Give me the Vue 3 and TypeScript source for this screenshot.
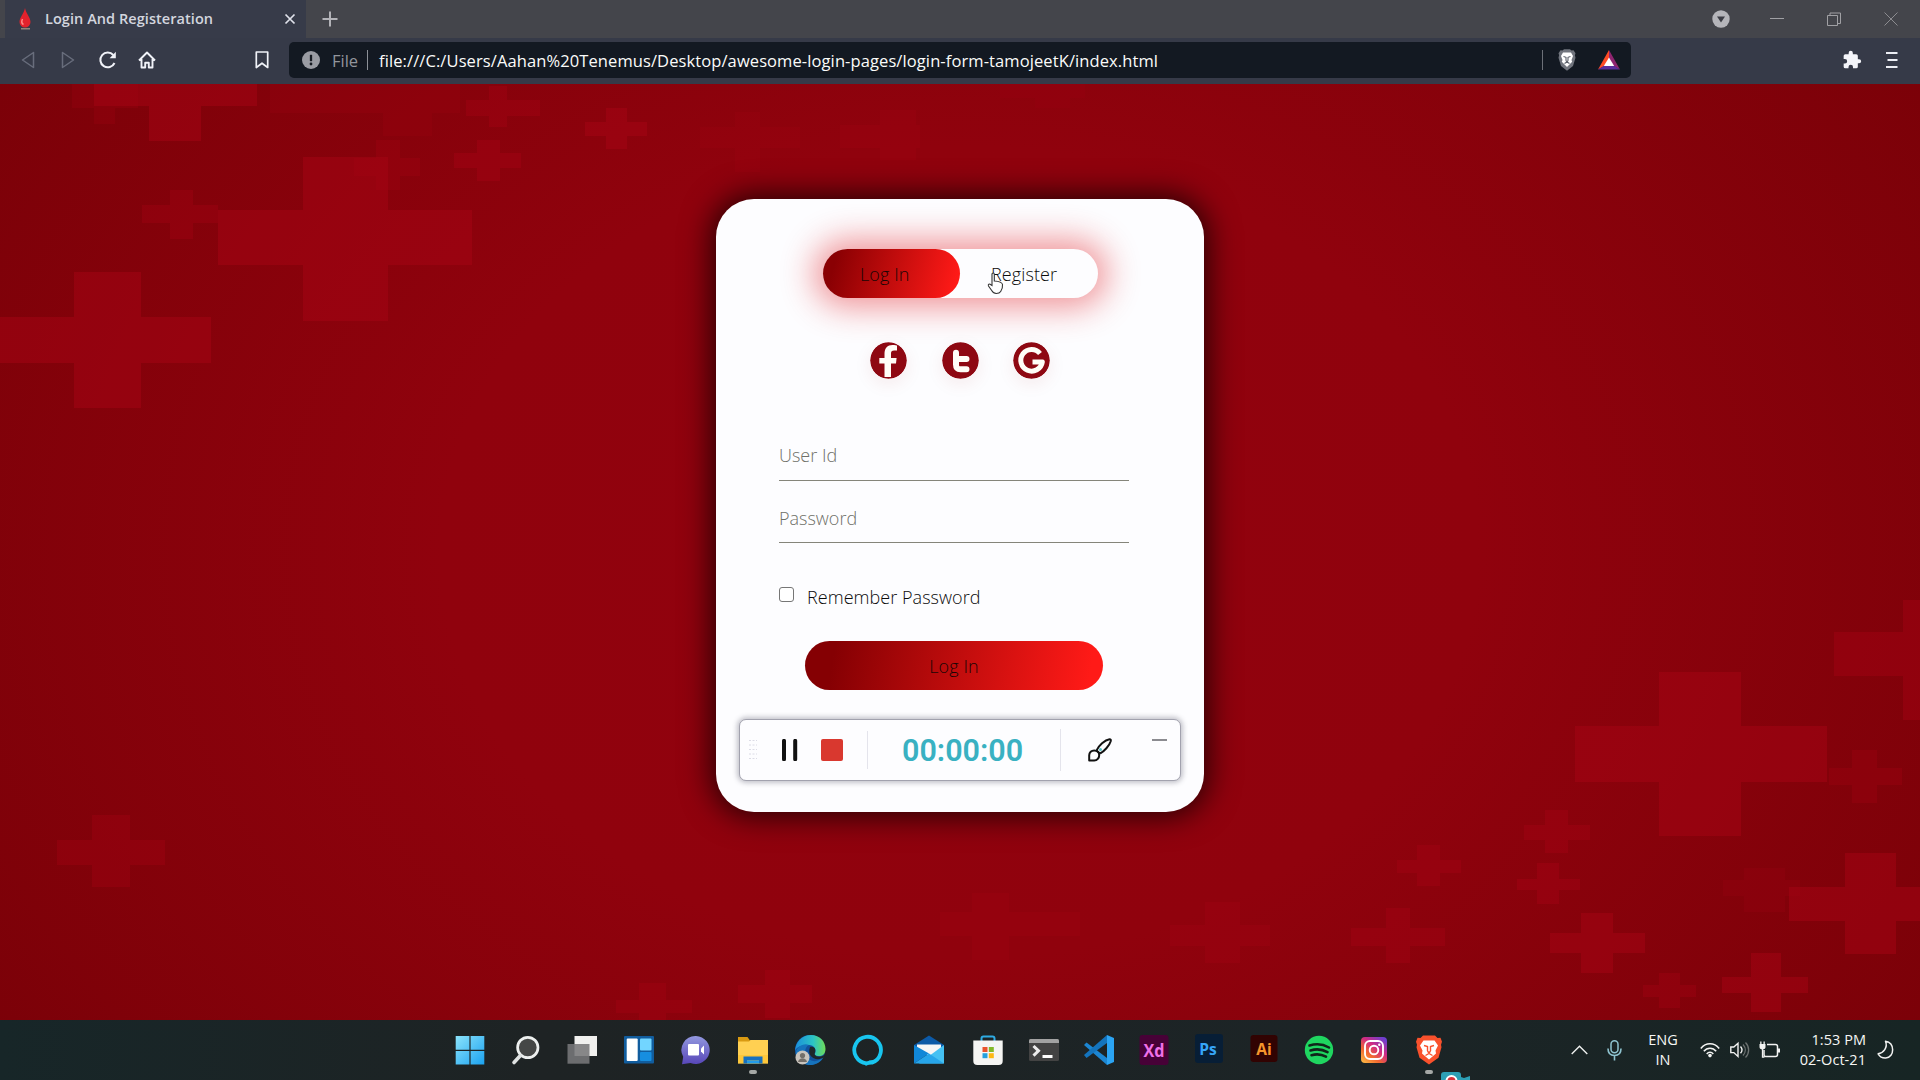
<script setup lang="ts">
import { ref } from 'vue'

interface Cross {
  v: [number, number, number, number]
  h: [number, number, number, number]
  o: number
}

// Each cross is an upright bar and a level bar, given as x1, y1, x2, y2.
const crosses: Cross[] = [
  { v: [303, 157, 388, 321], h: [218, 210, 472, 265], o: 0.5 },
  { v: [74, 272, 141, 408], h: [0, 317, 211, 363], o: 0.5 },
  { v: [170, 190, 193, 239], h: [142, 205, 218, 223], o: 0.35 },
  { v: [149, 84, 201, 141], h: [94, 84, 257, 106], o: 0.5 },
  { v: [94, 84, 115, 124], h: [72, 84, 138, 108], o: 0.25 },
  { v: [489, 86, 507, 127], h: [466, 100, 540, 116], o: 0.4 },
  { v: [606, 108, 627, 149], h: [585, 122, 647, 136], o: 0.5 },
  { v: [477, 140, 500, 181], h: [454, 153, 521, 168], o: 0.45 },
  { v: [376, 140, 400, 190], h: [354, 158, 420, 176], o: 0.3 },
  { v: [383, 84, 432, 136], h: [270, 84, 460, 113], o: 0.2 },
  { v: [735, 112, 760, 172], h: [700, 127, 800, 148], o: 0.2 },
  { v: [880, 110, 916, 160], h: [840, 125, 920, 148], o: 0.25 },
  { v: [1035, 84, 1070, 108], h: [1000, 84, 1085, 98], o: 0.15 },
  { v: [1659, 672, 1741, 836], h: [1575, 726, 1827, 782], o: 0.5 },
  { v: [1903, 600, 1920, 720], h: [1834, 632, 1920, 676], o: 0.45 },
  { v: [1845, 853, 1896, 954], h: [1789, 887, 1920, 921], o: 0.5 },
  { v: [1852, 750, 1877, 803], h: [1829, 768, 1902, 785], o: 0.3 },
  { v: [1581, 913, 1613, 973], h: [1550, 933, 1645, 953], o: 0.5 },
  { v: [1751, 953, 1781, 1012], h: [1722, 977, 1808, 993], o: 0.5 },
  { v: [1545, 810, 1568, 853], h: [1524, 825, 1590, 840], o: 0.4 },
  { v: [1537, 863, 1559, 904], h: [1517, 879, 1580, 890], o: 0.45 },
  { v: [1417, 845, 1440, 886], h: [1397, 860, 1461, 873], o: 0.4 },
  { v: [1386, 908, 1410, 963], h: [1351, 928, 1445, 946], o: 0.4 },
  { v: [1659, 973, 1680, 1008], h: [1643, 985, 1696, 997], o: 0.35 },
  { v: [1744, 868, 1785, 912], h: [1723, 880, 1800, 896], o: 0.2 },
  { v: [1205, 902, 1240, 963], h: [1170, 925, 1270, 946], o: 0.3 },
  { v: [92, 815, 130, 887], h: [57, 840, 165, 865], o: 0.35 },
  { v: [639, 983, 666, 1020], h: [616, 1000, 692, 1013], o: 0.35 },
  { v: [765, 970, 790, 1018], h: [738, 985, 812, 1003], o: 0.4 },
  { v: [972, 893, 1009, 960], h: [940, 912, 1080, 936], o: 0.25 },
]

const bar = (b: [number, number, number, number]) => `M${b[0]} ${b[1]}H${b[2]}V${b[3]}H${b[0]}Z`

const userId = ref('')
const password = ref('')
const remember = ref(false)
</script>

<template>
  <div class="screen">
    <header class="tabstrip">
      <div class="tab">
        <svg class="drop" width="12" height="22" viewBox="0 0 12 22">
          <path d="M6 0C6.800 5 11.500 9.500 11.500 14a5.500 5.500 0 0 1-11 0C.5 9.500 5.200 5 6 0Z" fill="#e3222c" />
          <path d="M3.500 11c-1.600 3.500 0 5 1 5.500" stroke="#ff8a86" stroke-width="1.500" fill="none" />
          <path d="M2 20.800h9" stroke="#a98" stroke-width="1.200" />
        </svg>
        <span class="tab-title">Login And Registeration</span>
        <svg class="tab-close" width="12" height="12" viewBox="0 0 12 12"><path d="M1.500 1.500l9 9M10.500 1.500l-9 9" stroke="#dfe1ea" stroke-width="1.700" /></svg>
      </div>
      <svg class="new-tab" width="16" height="16" viewBox="0 0 16 16"><path d="M8 .5v15M.5 8h15" stroke="#b3b3b8" stroke-width="2" /></svg>
      <div class="window-buttons">
        <svg width="18" height="18" viewBox="0 0 18 18"><circle cx="9" cy="9" r="8.700" fill="#b5b5ba" /><path d="M5 6.500h8L9 12.500Z" fill="#3c3d45" /></svg>
        <svg width="14" height="14" viewBox="0 0 14 14"><path d="M0 6.500h14" stroke="#a0a0a4" /></svg>
        <svg width="14" height="14" viewBox="0 0 14 14"><path d="M.5 3.500h10v10H.5ZM3 3.500V1h10.500v10.500h-3" stroke="#a0a0a4" fill="none" /></svg>
        <svg width="14" height="14" viewBox="0 0 14 14"><path d="M.5.5l13 13M13.500.5l-13 13" stroke="#8c8c90" /></svg>
      </div>
    </header>

    <nav class="toolbar">
      <svg class="back" width="14" height="18" viewBox="0 0 14 18"><path d="M12.500 1.500v15L1.500 9Z" stroke="#686d7c" stroke-width="1.500" fill="none" stroke-linejoin="round" /></svg>
      <svg class="forward" width="14" height="18" viewBox="0 0 14 18"><path d="M1.500 1.500v15L12.500 9Z" stroke="#686d7c" stroke-width="1.500" fill="none" stroke-linejoin="round" /></svg>
      <svg class="reload" width="20" height="20" viewBox="0 0 20 20"><path d="M16.500 13a7.400 7.400 0 1 1-1.200-8" stroke="#f0f2f8" stroke-width="2" fill="none" /><path d="M17.800 1.800v6.400h-6.200Z" fill="#f0f2f8" /></svg>
      <svg class="home" width="18" height="18" viewBox="0 0 18 18"><path d="M1 9.500L9 1.500l8 8M3.500 8v8.500h3.700v-4.800h3.600v4.800h3.700V8" stroke="#f0f2f8" stroke-width="1.900" fill="none" stroke-linejoin="round" /></svg>
      <svg class="mark" width="14" height="18" viewBox="0 0 14 18"><path d="M1.300 1h11.400v15.500L7 12.200 1.300 16.500Z" stroke="#f0f2f8" stroke-width="1.700" fill="none" stroke-linejoin="round" /></svg>
      <div class="address">
        <svg width="18" height="18" viewBox="0 0 18 18"><circle cx="9" cy="9" r="9" fill="#9a9ca3" /><path d="M9 3.800v6.400" stroke="#171b22" stroke-width="2.300" /><circle cx="9" cy="13" r="1.400" fill="#171b22" /></svg>
        <span class="scheme">File</span>
        <i class="bar-line"></i>
        <span class="url">file:///C:/Users/Aahan%20Tenemus/Desktop/awesome-login-pages/login-form-tamojeetK/index.html</span>
        <i class="end-line"></i>
        <svg class="shield" width="18" height="22" viewBox="0 0 18 22"><path d="M4.500 1.500 6 .3h6l1.500 1.200 2-.3 2 3-.6 2 .6 2.500L15 17l-6 4.700L3 17 .5 8.700l.6-2.500-.6-2 2-3Z" fill="#70747d" /><path d="M5 3.500h8l2 3.500-1.500 4 .7 1.800L9 18l-5.200-5.200.7-1.800L3 7Z" fill="#fff" /><path d="M5.500 7.500l2.500.8v3.500M12.500 7.500l-2.500.8v3.500M6.500 14.500 9 13l2.500 1.500M8 11.700l1 1.300 1-1.300" stroke="#5a5f69" stroke-width="1.100" fill="none" /></svg>
        <svg class="bat" width="22" height="20" viewBox="0 0 22 20"><path d="M11 0 0 19.500l11-6Z" fill="#ff4b24" /><path d="M11 0l11 19.500-11-6Z" fill="#8f2470" /><path d="M0 19.500h22l-11-7Z" fill="#5b2e9c" /><path d="M11 7.500 5.800 16h10.400Z" fill="#fff" /></svg>
      </div>
      <svg class="puzzle" width="20" height="20" viewBox="0 0 24 24"><path d="M20.500 11H19V7a2 2 0 0 0-2-2h-4V3.500a2.500 2.500 0 0 0-5 0V5H4a2 2 0 0 0-2 2v3.800h1.500a2.700 2.700 0 0 1 0 5.400H2V20a2 2 0 0 0 2 2h3.800v-1.500a2.700 2.700 0 0 1 5.400 0V22H17a2 2 0 0 0 2-2v-4h1.500a2.500 2.500 0 0 0 0-5Z" fill="#f4f5fa" /></svg>
      <svg class="menu" width="12" height="16" viewBox="0 0 12 16"><path d="M0 1h11.500M1.500 8h10M0 15h11.500" stroke="#eceef4" stroke-width="1.900" /></svg>
    </nav>

    <main class="page">
      <svg class="pattern" width="1920" height="936" viewBox="0 84 1920 936">
        <path v-for="(c, i) in crosses" :key="i" :d="bar(c.v) + bar(c.h)" fill="#a50313" :opacity="c.o" />
      </svg>

      <section class="card">
        <div class="toggle">
          <button class="choice active">Log In</button>
          <button class="choice register">Register</button>
        </div>

        <div class="socials">
          <svg viewBox="0 0 37 37" width="37" height="37"><circle cx="18.500" cy="18.500" r="18.300" fill="#8e0812" /><path d="M14.500 35V21.500H9.300v-5.500h5.200v-4c0-6 3-9 8-9 2.500 0 4 .3 4.500.6v4.800h-2.800c-2.500 0-3.200 1.100-3.200 3V16h5.600l-.6 5.500H21V35Z" fill="#fffdf7" /></svg>
          <svg viewBox="0 0 37 37" width="37" height="37"><circle cx="18.500" cy="18.500" r="18.300" fill="#8e0812" /><path d="M14 10.800v11.700c0 3.200 1.300 4.700 4.500 4.700h6M14 17h10.500" stroke="#fffdf7" stroke-width="6" stroke-linecap="round" stroke-linejoin="round" fill="none" /></svg>
          <svg viewBox="0 0 37 37" width="37" height="37"><circle cx="18.500" cy="18.500" r="18.300" fill="#8e0812" /><path d="M27 11.500a10.800 10.800 0 1 0 2.300 8.500H19.500" stroke="#fffdf7" stroke-width="5" fill="none" stroke-linejoin="round" /></svg>
        </div>

        <form class="form" @submit.prevent>
          <input v-model="userId" class="field" type="text" placeholder="User Id" />
          <input v-model="password" class="field second" type="password" placeholder="Password" />
          <label class="remember"><input v-model="remember" type="checkbox" /><span>Remember Password</span></label>
          <button class="submit" type="submit">Log In</button>
        </form>
      </section>

      <div class="recorder">
        <svg class="grip" width="8" height="22" viewBox="0 0 8 22"><path d="M0 1.500h8M0 6h8M0 10.500h8M0 15h8M0 19.500h8" stroke="#dcdce6" stroke-dasharray="2 1.500" /></svg>
        <svg class="pause" width="16" height="22" viewBox="0 0 16 22"><path d="M2 1.800v18.400M13.200 1.800v18.400" stroke="#111" stroke-width="4" stroke-linecap="round" /></svg>
        <i class="stop"></i>
        <i class="rule"></i>
        <span class="timer">00:00:00</span>
        <i class="rule tall"></i>
        <svg class="brush" width="24" height="24" viewBox="0 0 24 24"><g stroke="#111" stroke-width="2" fill="none" stroke-linejoin="round"><path d="M8.500 12.500C10.500 7.500 17 1.800 21.500 1.200c1.300 0 1.500.8 1.200 2C21.500 7.500 16 13.500 12 15.500" /><path d="M1.200 22.500v-5.200c0-3 2.200-4.800 5-4.800s5 2 5 4.700-2 5.300-5 5.300Z" /><path d="M8.500 12.500 12 15.500" /></g><circle cx="12.500" cy="11.500" r="1.500" fill="#54bfc4" /></svg>
        <i class="minimise"></i>
      </div>

      <svg class="pointer" width="17" height="23" viewBox="0 0 17 23"><path d="M5 13.500V2.300c0-1.700 2.300-1.700 2.300 0V9c3.500.2 7.700 1 8.200 3.500.3 2.500-.5 5-1.800 7-1 1.700-2.300 2-4.500 2-2.500 0-3.500-1.300-4.500-3L1.500 14c-.8-1.700 1-2.500 2-1.500Z" fill="#fff" stroke="#333" stroke-width="1.100" /></svg>
    </main>

    <footer class="taskbar">
      <div class="apps">
        <svg viewBox="-16 -16 32 32"><defs><linearGradient id="win" x1="0" y1="0" x2="1" y2="1"><stop offset="0" stop-color="#8be3fb" /><stop offset="1" stop-color="#1ba2f0" /></linearGradient></defs><path d="M-14.300-14H-.6V-.3H-14.300ZM.6-14H14.300V-.3H.6ZM-14.300.9H-.6V14.600H-14.300ZM.6.9H14.300V14.600H.6Z" fill="url(#win)" /></svg>
        <svg viewBox="-16 -16 32 32"><circle cx="1.800" cy="-2.500" r="10.200" fill="#454746" stroke="#edf0ef" stroke-width="2.700" /><path d="M-5.800 5.700-12 12.500" stroke="#dfe2e2" stroke-width="3.600" stroke-linecap="round" /></svg>
        <svg viewBox="-16 -16 32 32"><path d="M-7.500-14H15V6H-7.500Z" fill="#f1f1ef" /><path d="M-14.500-6H7.500V13.700H-14.500Z" fill="#77787a" opacity=".88" /></svg>
        <svg viewBox="-16 -16 32 32"><rect x="-15" y="-14" width="30" height="27.500" rx="1" fill="#115d9e" /><rect x="-12.300" y="-11.500" width="11" height="22.500" rx="1" fill="#fff" /><rect x="1" y="-11.500" width="11.500" height="12" rx="1" fill="#72d5ff" /><rect x="1" y="2" width="11.500" height="9" rx="1" fill="#168ee0" /></svg>
        <svg viewBox="-16 -16 32 32"><defs><linearGradient id="chat" x2="0" y2="1"><stop stop-color="#9298df" /><stop offset="1" stop-color="#5746b8" /></linearGradient></defs><path d="M0-14a14 14 0 1 1-5.500 27l-8.500 1.200 1.200-7.400A14 14 0 0 1 0-14Z" fill="url(#chat)" /><rect x="-8" y="-6" width="11" height="11.500" rx="1" fill="#fff" /><path d="M5-1.500 8-4.500V4.500L5 1.500Z" fill="#fff" /></svg>
        <svg viewBox="-16 -16 32 32"><path d="M-15-13h9.500l2.500 3.500H15V0H-15Z" fill="#d99a12" /><path d="M-15-8.500h11L-2.500-10H15V13.500H-15Z" fill="#ffd052" /><path d="M-15 5H15V13.500H-15Z" fill="#fbc12d" opacity=".6" /><path d="M-9.500 13.500V6.500h19v7H6v-3H-6v3Z" fill="#1670bf" /><path d="M-6 10.500H6v3H-6Z" fill="#239be9" /></svg>
        <svg viewBox="-16 -16 32 32"><defs><linearGradient id="edge"><stop stop-color="#1b8edc" /><stop offset=".6" stop-color="#2cc4c4" /><stop offset="1" stop-color="#6fdc58" /></linearGradient></defs><circle r="15" fill="#12529e" /><path d="M-15 2C-15-8-8-15 1-15S15.500-8.500 15.500-1 8 7.500 4.500 4.500C7.500 0 4-5-1-5S-15-4-15 2Z" fill="url(#edge)" /><path d="M-1-5C-6-3-6 5-1 9S9 11 13.500 7C9 17-7 18-13 8-18-1-7-8-1-5Z" fill="#1673bd" /><path d="M0-3c6-1 6 4 4.500 7C6 8 12 7 14 5v2C8 12-4 8 0-3Z" fill="#1e272a" /><circle cx="-7.500" cy="7.500" r="7" fill="#c9c4bd" /><circle cx="-7.500" cy="5.500" r="2.600" fill="#746f69" /><path d="M-12 12c1-5 8-5 9 0Z" fill="#746f69" /></svg>
        <svg viewBox="-16 -16 32 32"><path d="M-1.500 13.300A13.300 13.300 0 1 1 4 12.600Q1 12.500-1.500 13.300Z" fill="none" stroke="#18c5ef" stroke-width="3.800" stroke-linejoin="round" /><path d="M-3 15.500 1 10.500 6 10-1 15.500Z" fill="#18c5ef" /></svg>
        <svg viewBox="-16 -16 32 32"><path d="M-15-5 0-14.500 15-5V5H-15Z" fill="#0c5aa7" /><path d="M-12-5.500H12V5H-12Z" fill="#f6f6f6" /><path d="M-15-5 0 3.500-15 13.500Z" fill="#1187d8" /><path d="M15-5-10 13.500H15Z" fill="#45c1f3" /><path d="M-15 13.500 0 3.500 15 13.500Z" fill="#27a5ea" /></svg>
        <svg viewBox="-16 -16 32 32"><path d="M-6.500-8V-11.500q0-2 2-2h9q2 0 2 2V-8" fill="none" stroke="#2eabe3" stroke-width="2" /><path d="M-14.700-9.500H14.700V11q0 4-4 4H-10.700q-4 0-4-4Z" fill="#f5f5f3" /><path d="M-5.500-3H-.5V2H-5.500Z" fill="#e9532c" /><path d="M.8-3H5.800V2H.8Z" fill="#82b928" /><path d="M-5.500 3.200H-.5V8.200H-5.500Z" fill="#25a0de" /><path d="M.8 3.200H5.800V8.200H.8Z" fill="#fdb813" /></svg>
        <svg viewBox="-16 -16 32 32"><rect x="-15" y="-11" width="30" height="22" rx="1.500" fill="#434343" /><path d="M-15-7V-9.500q0-1.500 1.500-1.500h27q1.500 0 1.500 1.500V-7Z" fill="#a2a2a2" /><path d="M-10.500-4-5.500.8-10.500 5.600" stroke="#ececec" stroke-width="3" fill="none" /><path d="M-1.500 6.500H8.500" stroke="#fff" stroke-width="3" /></svg>
        <svg viewBox="-16 -16 32 32"><path d="M-15-5-12.500-7.500 8 8V15Z" fill="#1c86d2" /><path d="M8-15V-7L-12.500 8-15 5Z" fill="#1474bd" /><path d="M8-15 15-12V12L8 15Z" fill="#2ba4f3" /></svg>
        <svg viewBox="-16 -16 32 32"><rect x="-14.500" y="-15" width="29" height="30" rx="3" fill="#470137" /><text x="0" y="6.500" text-anchor="middle" textLength="21" lengthAdjust="spacingAndGlyphs" fill="#f070e8" font-size="17">Xd</text></svg>
        <svg viewBox="-16 -16 32 32"><rect x="-14" y="-16" width="28" height="29" rx="3" fill="#071e36" /><text x="-1" y="4.500" text-anchor="middle" textLength="17.500" lengthAdjust="spacingAndGlyphs" fill="#36a5f8" font-size="16.500">Ps</text></svg>
        <svg viewBox="-16 -16 32 32"><rect x="-13.500" y="-15" width="27" height="27" rx="3" fill="#310302" /><text x="0" y="4.500" text-anchor="middle" textLength="15.500" lengthAdjust="spacingAndGlyphs" fill="#f5962b" font-size="16.500">Ai</text></svg>
        <svg viewBox="-16 -16 32 32"><circle r="14.200" fill="#1fd660" /><path d="M-9.500-4.500C-3-6.500 4-6 10-2.500M-8.500.5C-3-1.300 3.500-.7 8.500 2.200M-7.500 5.200C-2.500 3.700 2.500 4.200 7 6.700" stroke="#10251a" stroke-width="2.600" stroke-linecap="round" fill="none" /></svg>
        <svg viewBox="-16 -16 32 32"><defs><linearGradient id="insta" x1="0" y1="1" x2=".8" y2="0"><stop stop-color="#fec348" /><stop offset=".35" stop-color="#f26a2f" /><stop offset=".65" stop-color="#cf2a83" /><stop offset="1" stop-color="#6d3fd0" /></linearGradient></defs><rect x="-13" y="-13" width="26" height="26" rx="4" fill="url(#insta)" /><rect x="-9" y="-9" width="18" height="18" rx="5" fill="none" stroke="#fff" stroke-width="1.900" /><circle r="4.300" fill="none" stroke="#fff" stroke-width="1.900" /><circle cx="5.300" cy="-5.300" r="1.200" fill="#fff" /></svg>
        <svg viewBox="-16 -16 32 32"><path d="M-6-14.500H6l2.500 2.500 3-.3 1.500 4-1 3 .5 2.500-3 10.500L0 14.500-9.500 7.700l-3-10.500.5-2.500-1-3 1.500-4 3 .3Z" fill="#f9512c" /><path d="M-5.500-9.500H5.500L9-4.500 6.500.5 7 3.500 0 9.500-7 3.500l.5-3L-9-4.500Z" fill="#fff" /><path d="M-5-4.500-1.500-3.500V1M5-4.500 1.500-3.500V1M-3.500 5.500 0 3.500 3.500 5.500M-1.500 1 0 3 1.500 1" stroke="#f9512c" stroke-width="1.400" fill="none" /></svg>
      </div>
      <i class="running explorer"></i>
      <i class="running brave"></i>
      <svg class="camera" width="30" height="8" viewBox="0 0 30 8"><path d="M0 8V3q0-3 3-3h14q3 0 3 3v2l3 1 6-2v4Z" fill="#2d9fb5" /><circle cx="10.500" cy="9" r="6" fill="#fff" /><circle cx="10.500" cy="9" r="4" fill="#d6333b" /></svg>

      <div class="tray">
        <svg class="chevron" width="17" height="10" viewBox="0 0 17 10"><path d="M.7 9 8.500 1.200 16.300 9" stroke="#eef0ef" stroke-width="1.400" fill="none" /></svg>
        <svg class="mic" width="15" height="21" viewBox="0 0 15 21"><rect x="4" y=".8" width="7" height="12" rx="3.500" fill="none" stroke="#8fc4d0" stroke-width="1.500" /><path d="M1 8.500c0 4.500 2.500 7 6.500 7s6.500-2.500 6.500-7M7.500 15.500v5" stroke="#8fc4d0" stroke-width="1.600" fill="none" /></svg>
        <div class="lang"><span>ENG</span><span>IN</span></div>
        <svg class="wifi" width="20" height="16" viewBox="0 0 20 16"><path d="M.8 6.500c5-6.300 13.400-6.300 18.400 0M3.800 9.300c3.400-4.200 9-4.200 12.400 0M6.700 12c1.900-2.200 4.700-2.200 6.600 0" stroke="#f2f3f2" stroke-width="1.500" fill="none" /><circle cx="10" cy="13.600" r="1.800" fill="#f2f3f2" /></svg>
        <svg class="sound" width="20" height="18" viewBox="0 0 20 18"><path d="M.8 6v5.600h3L8 15.500V2.300L3.800 6Z" stroke="#f2f3f2" stroke-width="1.400" fill="none" /><path d="M10.500 5.500c1.800 2 1.800 4.800 0 6.800" stroke="#f2f3f2" stroke-width="1.400" fill="none" /><path d="M13 3.500c3 3.300 3 7.700 0 11M15.500 1.500c4.200 4.300 4.200 10.700 0 15" stroke="#6d7372" stroke-width="1.300" fill="none" /></svg>
        <svg class="battery" width="21" height="18" viewBox="0 0 21 18"><path d="M8 3.500h8.500q2 0 2 2v8q0 2-2 2H6.500q-1.500 0-1.500-2V9" stroke="#f2f3f2" stroke-width="1.500" fill="none" /><path d="M19 7.500h2v4h-2Z" fill="#f2f3f2" /><path d="M.5 3h6v3q0 2-3 2.500-3-.5-3-2.500ZM1.200.5h1.300V3H1.200ZM4.500.5h1.300V3H4.500Z" fill="#f2f3f2" /><path d="M3.500 8v8h2" stroke="#f2f3f2" stroke-width="1.300" fill="none" /></svg>
        <div class="clock"><span>1:53 PM</span><span class="date">02-Oct-21</span></div>
        <svg class="moon" width="17" height="20" viewBox="0 0 17 20"><path d="M8.500 1.200c9.500.7 9.500 16.300.2 16.800-3.200.2-6-1.500-7.600-4.200C6.500 13 11 7.500 8.500 1.200Z" stroke="#f2f3f2" stroke-width="1.500" fill="none" stroke-linejoin="round" /></svg>
      </div>
    </footer>
  </div>
</template>

<style>
body {
  margin: 0;
  overflow: hidden;
}
</style>

<style scoped>
.screen {
  width: 1920px;
  height: 1080px;
  display: flex;
  flex-direction: column;
  overflow: hidden;
  font-family: 'Open Sans', 'Noto Sans', sans-serif;
}
svg {
  display: block;
  flex: none;
}
i {
  display: block;
  flex: none;
}

.tabstrip {
  height: 38px;
  flex: none;
  display: flex;
  align-items: center;
  background: #44454b;
}
.tab {
  width: 301px;
  height: 38px;
  margin-left: 5px;
  box-sizing: border-box;
  padding-left: 14px;
  display: flex;
  align-items: center;
  background: #373b49;
}
.tab-title {
  width: 164px;
  margin-left: 14px;
  font-size: 14.5px;
  font-weight: 550;
  line-height: 36px;
  color: #d3d6df;
  white-space: nowrap;
  letter-spacing: 0.06px;
}
.tab-close {
  margin-left: 75px;
}
.new-tab {
  margin-left: 16px;
}
.window-buttons {
  margin-left: auto;
  margin-right: 22px;
  display: flex;
  align-items: center;
  gap: 43px;
}
.window-buttons svg:first-child {
  margin-right: -3px;
}

.toolbar {
  height: 46px;
  flex: none;
  display: flex;
  align-items: center;
  background: #363a48;
  box-sizing: border-box;
  padding-bottom: 2px;
}
.back {
  margin-left: 21px;
}
.forward {
  margin-left: 26px;
}
.reload {
  margin-left: 23px;
}
.home {
  margin-left: 20px;
}
.mark {
  margin-left: 99px;
}
.address {
  width: 1342px;
  height: 36px;
  margin-left: 20px;
  box-sizing: border-box;
  padding-left: 13px;
  border-radius: 5px;
  background: #131922;
  display: flex;
  align-items: center;
}
.scheme {
  width: 28px;
  margin-left: 12px;
  font-size: 16.5px;
  color: #92959c;
}
.bar-line {
  width: 1px;
  height: 20px;
  margin-left: 7px;
  background: #8c9097;
}
.url {
  flex: none;
  width: 1163px;
  margin-left: 11px;
  font-size: 16.5px;
  color: #fbfcfa;
  white-space: nowrap;
  letter-spacing: 0.1px;
}
.end-line {
  width: 1px;
  height: 20px;
  background: #6c7078;
}
.shield {
  margin-left: 15px;
}
.bat {
  margin-left: 22px;
}
.puzzle {
  margin-left: 211px;
}
.menu {
  margin-left: 24px;
}

.page {
  position: relative;
  flex: none;
  height: 936px;
  display: flex;
  justify-content: center;
  align-items: flex-start;
  background: radial-gradient(ellipse 1150px 900px at 50% 50%, #92020e 0%, #90020d 45%, #7b0108 100%);
}
.pattern {
  position: absolute;
  left: 0;
  top: 0;
}
.card {
  position: relative;
  width: 488px;
  height: 613px;
  margin-top: 115px;
  box-sizing: border-box;
  padding: 50px 0 0 63px;
  border-radius: 38px;
  background: #fdfdff;
  box-shadow: 0 0 30px 5px rgba(0, 0, 0, 0.72);
}
.card,
.card button,
.card input {
  font-family: 'Open Sans', 'Noto Sans', sans-serif;
  font-size: 18px;
  font-weight: 350;
}
.card button {
  border: 0;
  margin: 0;
  color: #1a0505;
  letter-spacing: 0.1px;
}
.toggle {
  width: 275px;
  height: 49px;
  margin-left: 44px;
  display: flex;
  border-radius: 25px;
  background: #fdfdff;
  box-shadow: 0 0 32px 10px rgba(225, 20, 25, 0.43);
}
.choice {
  width: 137px;
  height: 49px;
  padding: 0 0 0 37px;
  border-radius: 25px;
  text-align: left;
  background: transparent;
}
.choice.active {
  background: linear-gradient(105deg, #8a0003 10%, #ff1a17 95%);
}
.card .register {
  padding-left: 31px;
  color: #0c0c0c;
}
.socials {
  display: flex;
  gap: 34.5px;
  margin: 44px 0 0 91px;
}
.socials svg {
  border-radius: 50%;
  box-shadow: 0 5px 18px rgba(150, 20, 20, 0.08);
}
.form {
  display: flex;
  flex-direction: column;
  margin-top: 61px;
  width: 350px;
}
.card .field {
  width: 350px;
  height: 41px;
  box-sizing: border-box;
  padding: 0 0 10px;
  border: 0;
  border-bottom: 1px solid #85857a;
  background: transparent;
  outline: 0;
  letter-spacing: 0;
}
.field::placeholder {
  color: #6f7068;
  opacity: 1;
}
.card .field.second {
  margin-top: 21px;
  padding-bottom: 9px;
}
.remember {
  display: flex;
  align-items: flex-start;
  margin-top: 44px;
  height: 30px;
  color: #0b0b0b;
}
.remember input {
  appearance: none;
  width: 15px;
  height: 15px;
  margin: 0;
  border: 1px solid #767676;
  border-radius: 3px;
  background: #fff;
}
.remember span {
  margin-left: 13px;
  line-height: 20px;
  letter-spacing: 0.05px;
}
.card .submit {
  width: 298px;
  height: 49px;
  margin: 24px 0 0 26px;
  padding: 0;
  border-radius: 25px;
  background: linear-gradient(100deg, #850003 10%, #ff1a17 95%);
}

.recorder {
  position: absolute;
  left: 739px;
  top: 635px;
  width: 442px;
  height: 62px;
  box-sizing: border-box;
  display: flex;
  align-items: center;
  border: 1px solid #a2a2ae;
  border-radius: 7px;
  background: #fdfdff;
  box-shadow: 0 0 5px 2px rgba(60, 60, 80, 0.3);
}
.grip {
  margin-left: 9px;
}
.pause {
  margin-left: 25px;
}
.stop {
  width: 22px;
  height: 22px;
  margin-left: 23px;
  border-radius: 2px;
  background: #d9382f;
}
.rule {
  width: 1px;
  height: 38px;
  margin-left: 24px;
  background: #e4e4ec;
}
.timer {
  width: 122px;
  margin-left: 34px;
  padding-top: 2px;
  font-family: Roboto, sans-serif;
  font-size: 30.5px;
  font-weight: 600;
  line-height: 40px;
  color: #39b1c2;
}
.rule.tall {
  margin-left: 36px;
  height: 42px;
}
.brush {
  margin-left: 27px;
}
.minimise {
  width: 15px;
  height: 2px;
  margin-left: 40px;
  margin-top: -20px;
  background: #8b8b90;
}
.pointer {
  position: absolute;
  left: 987px;
  top: 188px;
}

.taskbar {
  position: relative;
  height: 60px;
  flex: none;
  display: flex;
  align-items: center;
  background: linear-gradient(90deg, #172628 0%, #1e2324 28%, #1c2426 70%, #172524 100%);
}
.apps {
  display: grid;
  grid-template-columns: 56px 56px 57px 57px 57px 57px 58px 61px 59px 56px 55px 55px 55px 55px 55px 55px 55px 32px;
  margin-left: 454px;
  flex: none;
}
.apps svg {
  width: 32px;
  height: 32px;
}
.apps text {
  font-family: 'Open Sans', sans-serif;
  font-weight: 700;
}
.running {
  position: absolute;
  top: 50px;
  width: 8px;
  height: 4px;
  border-radius: 2px;
  background: #a5a8a6;
}
.explorer {
  left: 749px;
}
.brave {
  left: 1425px;
}
.camera {
  position: absolute;
  left: 1441px;
  top: 52px;
}
.tray {
  margin-left: 126px;
  display: flex;
  align-items: center;
  color: #f6f7f5;
  font-size: 14.5px;
  line-height: 20px;
}
.mic {
  margin-left: 19px;
}
.lang {
  width: 30px;
  margin-left: 26px;
  display: flex;
  flex-direction: column;
  align-items: center;
}
.wifi {
  margin-left: 22px;
}
.sound {
  margin-left: 10px;
}
.battery {
  margin-left: 9px;
}
.clock {
  width: 86px;
  display: flex;
  flex-direction: column;
  align-items: flex-end;
  white-space: nowrap;
  letter-spacing: 0.05px;
}
.moon {
  margin-left: 11px;
}
</style>
